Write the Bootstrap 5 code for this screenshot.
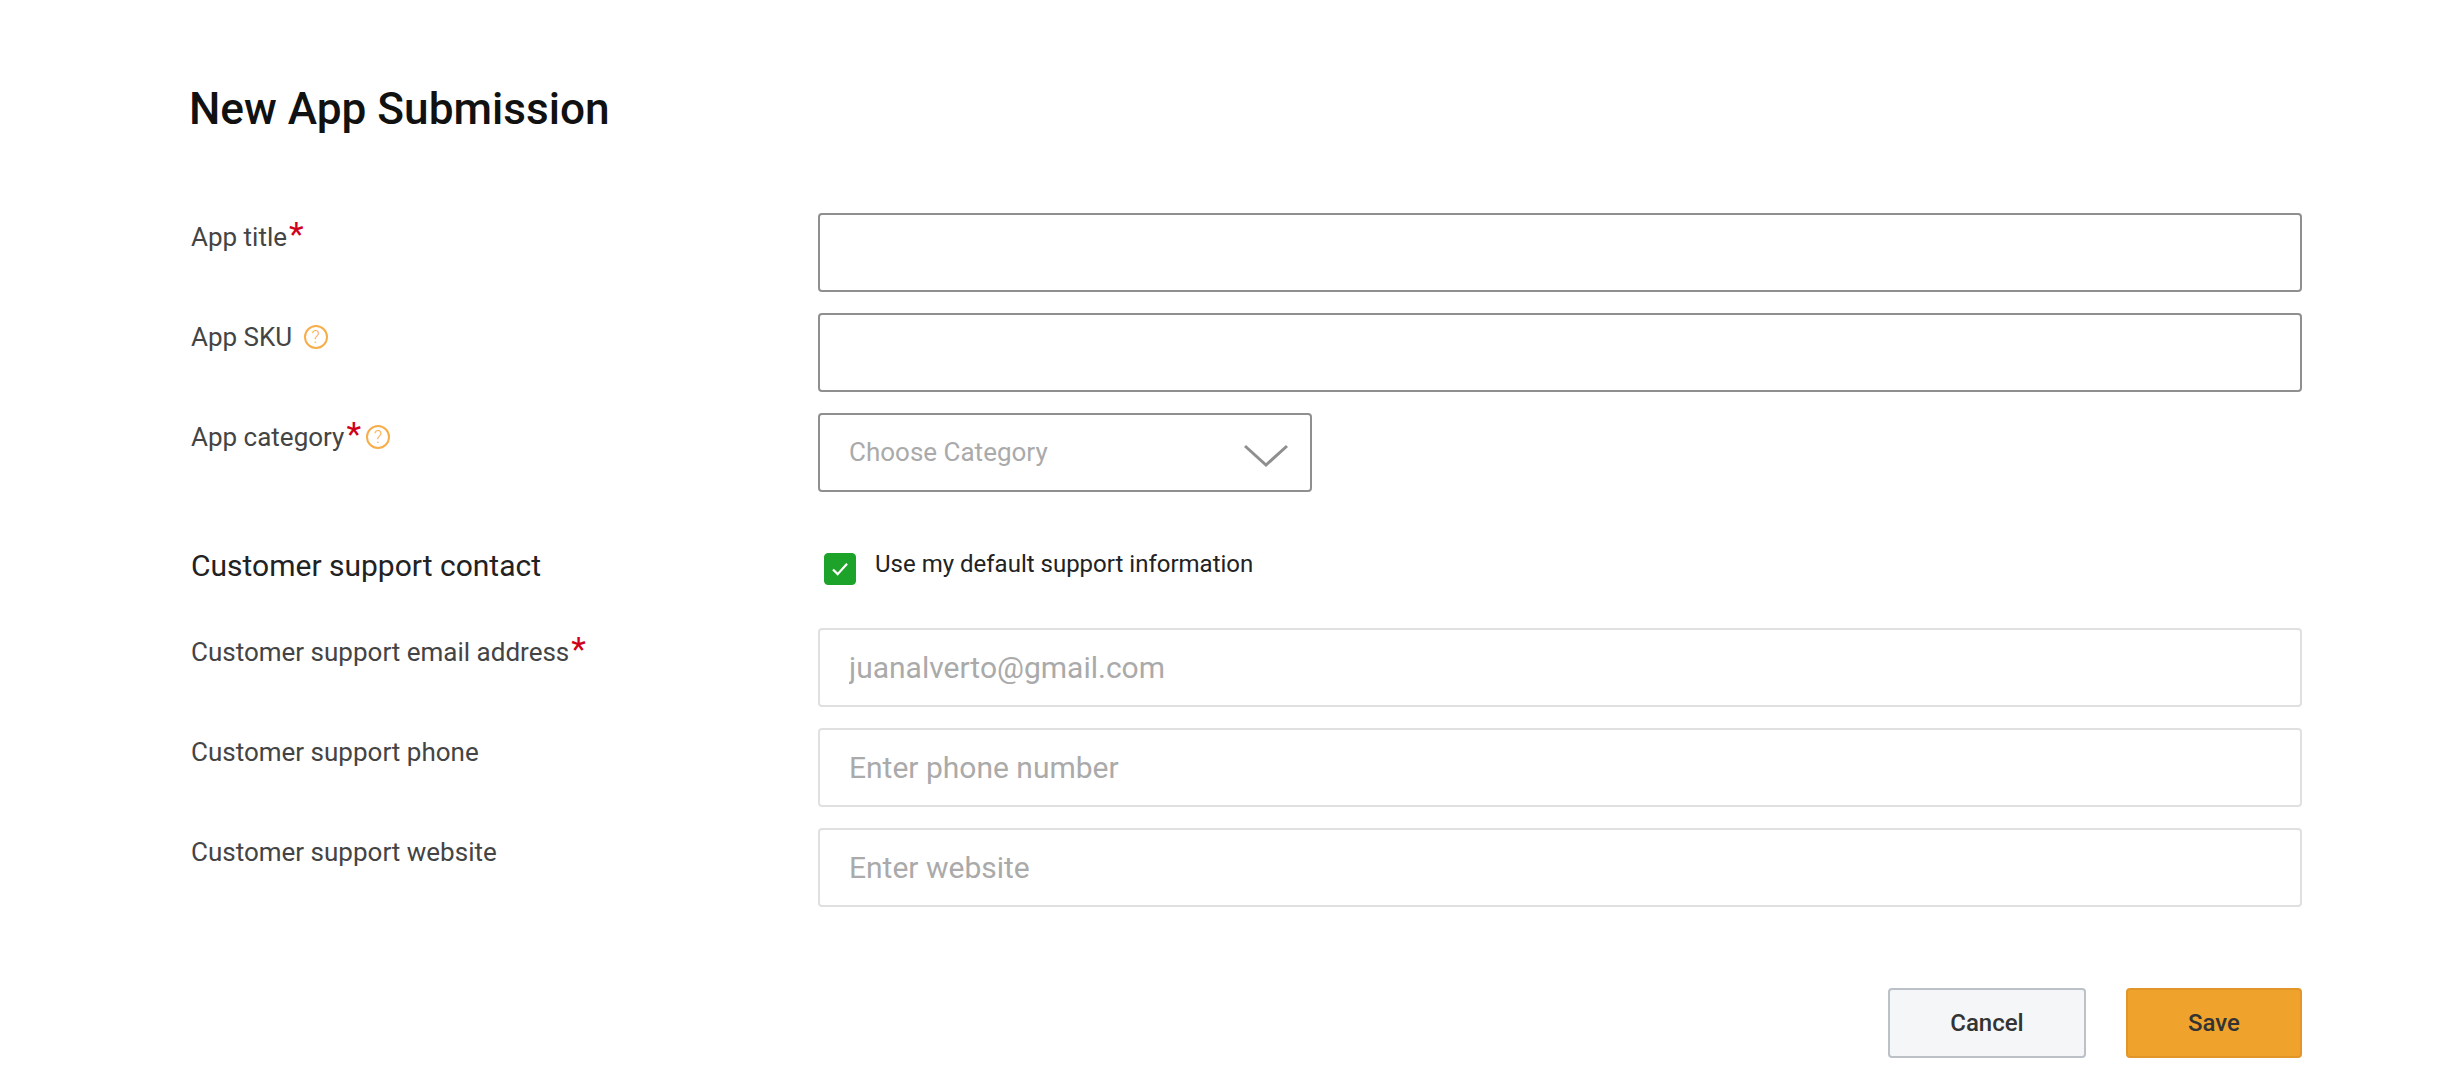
<!DOCTYPE html>
<html lang="en">
<head>
  <meta charset="UTF-8">
  <title>New App Submission</title>
  <link href="https://cdn.jsdelivr.net/npm/bootstrap@5.3.0/dist/css/bootstrap.min.css" rel="stylesheet">
  <style>
    body {
      font-family: Roboto, "Liberation Sans", sans-serif;
      background: #fff;
      overflow: hidden;
    }
    .page-wrap {
      padding: 79px 154px 0 190px;
    }
    .page-title {
      font-size: 44.2px;
      font-weight: 500;
      line-height: 60px;
      color: #111;
      margin: 0 0 74px -1px;
    }
    .field-row {
      display: flex;
      margin-bottom: 21px;
    }
    .field-label {
      width: 628px;
      flex: none;
      font-size: 26px;
      line-height: 34px;
      padding: 7px 0 0 1px;
      margin: 0;
      color: #444;
    }
    .req-star {
      color: #d0021b;
      font-size: 34px;
      line-height: 20px;
      margin-left: 2px;
      vertical-align: 0;
    }
    .help-dot {
      display: inline-block;
      width: 24px;
      height: 24px;
      border: 2px solid #f7ae4a;
      border-radius: 50%;
      color: #f7ae4a;
      font-size: 18px;
      font-weight: 300;
      line-height: 20px;
      text-align: center;
      vertical-align: 3px;
      margin-left: 5px;
    }
    .form-control.box-input,
    .form-select.box-select {
      height: 79px;
      border: 2px solid #8f8f8f;
      border-radius: 4px;
      padding: 0 29px;
      font-size: 30px;
      color: #333;
    }
    .form-control.box-input.soft {
      border-color: #e0e0e0;
    }
    .box-input::placeholder {
      color: #aaa;
    }
    .form-select.box-select {
      width: 494px;
      font-size: 26px;
      color: #aaa;
      background-image: none;
    }
    .select-wrap {
      position: relative;
      width: 494px;
    }
    .select-chevron {
      position: absolute;
      right: 24px;
      top: 31px;
      width: 44px;
      height: 24px;
      pointer-events: none;
    }
    .contact-row {
      display: flex;
      align-items: center;
      margin: 58px 0 42px 0;
      height: 36px;
    }
    .contact-title {
      width: 628px;
      flex: none;
      font-size: 30px;
      padding-left: 1px;
      margin-bottom: 5px;
      color: #222;
    }
    .form-check-input.green-check {
      width: 32px;
      height: 32px;
      margin: 2px 19px 0 6px;
      border-radius: 4px;
      border-color: #1da32a;
      background-color: #1da32a;
      background-image: url("data:image/svg+xml,%3csvg xmlns='http://www.w3.org/2000/svg' viewBox='0 0 32 32'%3e%3cpath fill='none' stroke='%23fff' stroke-width='2.4' d='M8.5 16.5l5 5 10-11'/%3e%3c/svg%3e");
      background-size: 100% 100%;
    }
    .check-text {
      font-size: 24px;
      color: #222;
      margin: 0 0 8px 0;
    }
    .action-row {
      display: flex;
      justify-content: flex-end;
      gap: 40px;
      margin-top: 81px;
    }
    .action-btn {
      height: 70px;
      font-size: 24px;
      font-weight: 500;
      border-radius: 4px;
      border-width: 2px;
      color: #333;
    }
    .btn-cancel {
      width: 198px;
      background: #f5f6f8;
      border-color: #bcc1c8;
    }
    .btn-save {
      width: 176px;
      background: #efa32c;
      border-color: #e2962a;
    }
  </style>
</head>
<body>
  <div class="page-wrap">
    <h1 class="page-title">New App Submission</h1>
    <form>
      <!-- App details -->
      <div class="field-row">
        <label class="field-label" for="appTitle">App title<span class="req-star">*</span></label>
        <input type="text" class="form-control box-input" id="appTitle">
      </div>
      <div class="field-row">
        <label class="field-label" for="appSku">App SKU <span class="help-dot">?</span></label>
        <input type="text" class="form-control box-input" id="appSku">
      </div>
      <div class="field-row mb-0">
        <label class="field-label" for="appCategory">App category<span class="req-star">*</span><span class="help-dot">?</span></label>
        <div class="select-wrap">
          <select class="form-select box-select" id="appCategory">
            <option>Choose Category</option>
          </select>
          <svg class="select-chevron" viewBox="0 0 44 24" fill="none" stroke="#8f8f8f" stroke-width="3">
            <path d="M1 2 L22 21 L43 2"/>
          </svg>
        </div>
      </div>

      <!-- Customer support -->
      <div class="contact-row">
        <div class="contact-title">Customer support contact</div>
        <input class="form-check-input green-check" type="checkbox" id="useDefault" checked>
        <label class="check-text" for="useDefault">Use my default support information</label>
      </div>
      <div class="field-row">
        <label class="field-label" for="supportEmail">Customer support email address<span class="req-star">*</span></label>
        <input type="text" class="form-control box-input soft" id="supportEmail" placeholder="juanalverto@gmail.com">
      </div>
      <div class="field-row">
        <label class="field-label" for="supportPhone">Customer support phone</label>
        <input type="text" class="form-control box-input soft" id="supportPhone" placeholder="Enter phone number">
      </div>
      <div class="field-row">
        <label class="field-label" for="supportWebsite">Customer support website</label>
        <input type="text" class="form-control box-input soft" id="supportWebsite" placeholder="Enter website">
      </div>

      <div class="action-row">
        <button type="button" class="btn action-btn btn-cancel">Cancel</button>
        <button type="submit" class="btn action-btn btn-save">Save</button>
      </div>
    </form>
  </div>
  <script src="https://cdn.jsdelivr.net/npm/bootstrap@5.3.0/dist/js/bootstrap.bundle.min.js"></script>
</body>
</html>
